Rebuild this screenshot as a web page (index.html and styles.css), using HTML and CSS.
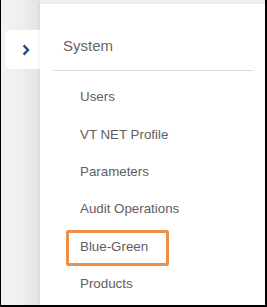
FILE: index.html
```html
<!DOCTYPE html>
<html>
<head>
<meta charset="utf-8">
<link rel="stylesheet" href="styles.css">
</head>
<body>
<div class="frame">
  <div class="rail">
    <div class="tab">
      <svg class="chev" width="8" height="12" viewBox="0 0 8 12"><path d="M1.6 1.4 L6 6 L1.6 10.6" fill="none" stroke="#1d4e89" stroke-width="2.4" stroke-linejoin="miter"/></svg>
    </div>
  </div>
  <div class="panel">
    <div class="header">System</div>
    <ul class="menu">
      <li class="item">Users</li>
      <li class="item">VT NET Profile</li>
      <li class="item">Parameters</li>
      <li class="item">Audit Operations</li>
      <li class="item highlight">Blue-Green</li>
      <li class="item">Products</li>
    </ul>
  </div>
</div>
</body>
</html>
```
FILE: styles.css
```css
html, body {
  margin: 0;
  padding: 0;
  background: #fff;
}
.frame {
  width: 267px;
  height: 307px;
  box-sizing: border-box;
  border-left: 1px solid #000;
  border-right: 2px solid #000;
  border-bottom: 2px solid #000;
  background: #efefef;
  display: flex;
  font-family: "Liberation Sans", Arial, sans-serif;
  overflow: hidden;
}
.rail {
  width: 39px;
  flex: none;
  background: linear-gradient(to right, #f3f3f3 0%, #eeeeee 60%, #e2e2e2 100%);
}
.tab {
  margin-top: 30px;
  margin-left: 4px;
  width: 35px;
  height: 39px;
  background: #fff;
  border-radius: 5px 0 0 5px;
  display: flex;
  align-items: center;
  padding-left: 17px;
  box-sizing: border-box;
}
.chev {
  display: block;
}
.panel {
  flex: 1;
  margin-top: 4px;
  background: #fff;
  box-shadow: -1px 0 3px rgba(0,0,0,0.06);
}
.header {
  margin: 0 12px 0 13px;
  padding: 33px 0 0 10px;
  height: 33px;
  line-height: 18px;
  font-size: 15px;
  color: #666666;
  border-bottom: 1px solid #dcdcdc;
}
.menu {
  list-style: none;
  margin: 0;
  padding: 7.4px 0 0 0;
}
.item {
  position: relative;
  height: 37.3px;
  line-height: 37.3px;
  padding-left: 40px;
  font-size: 13.33px;
  color: #606060;
}
.highlight::before {
  content: "";
  position: absolute;
  left: 26px;
  top: 2.5px;
  width: 103px;
  height: 36px;
  box-sizing: border-box;
  border: 3px solid #ee9047;
  border-radius: 2px;
}
```
